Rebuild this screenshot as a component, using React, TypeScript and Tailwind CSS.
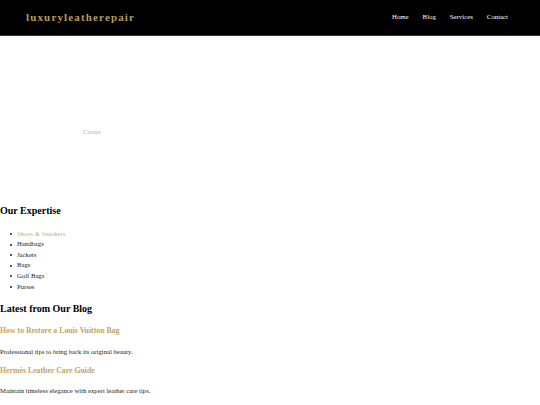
export default function App() {
  const expertise = ['Shoes & Sneakers', 'Handbags', 'Jackets', 'Bags', 'Golf Bags', 'Purses'];
  return (
    <div className="min-h-screen bg-white font-['Liberation_Serif',serif] text-[6.7px] leading-[1.6] text-[#222]">
      <header className="flex h-[36px] items-center justify-between border-b border-[#3a3a3a] bg-black pl-[26px] pr-[32px]">
        <a className="text-[11px] font-bold tracking-[1.15px] text-[#b89b5e]">luxuryleatherepair</a>
        <nav className="flex gap-[14px] text-[6.8px] text-white">
          <a>Home</a>
          <a>Blog</a>
          <a>Services</a>
          <a>Contact</a>
        </nav>
      </header>

      <section className="h-[159px] pl-[83px] pt-[91px]">
        <a className="text-[#cfb077]">Creare</a>
      </section>

      <section>
        <h2 className="mt-[8px] text-[10px] font-bold leading-[16px] text-black">Our Expertise</h2>
        <ul className="mt-[9.7px] pl-[10px] leading-[10.6px]">
          {expertise.map((item, i) => (
            <li key={item} className="flex items-center gap-[5px]">
              <span className="h-[2px] w-[2px] rounded-full bg-[#222]" />
              <span className={i === 0 ? 'text-[#cfb077]' : ''}>{item}</span>
            </li>
          ))}
        </ul>
      </section>

      <section>
        <h2 className="mt-[8.7px] text-[10px] font-bold leading-[16px] text-black">Latest from Our Blog</h2>
        <h3 className="mt-[7.6px] text-[7.8px] font-bold leading-[12.8px] text-[#c4a35f]">How to Restore a Louis Vuitton Bag</h3>
        <p className="mt-[9.2px] leading-[10.7px]">Professional tips to bring back its original beauty.</p>
        <h3 className="mt-[7.3px] text-[7.8px] font-bold leading-[12.8px] text-[#c4a35f]">Hermès Leather Care Guide</h3>
        <p className="mt-[8.2px] leading-[10.7px]">Maintain timeless elegance with expert leather care tips.</p>
      </section>
    </div>
  );
}
